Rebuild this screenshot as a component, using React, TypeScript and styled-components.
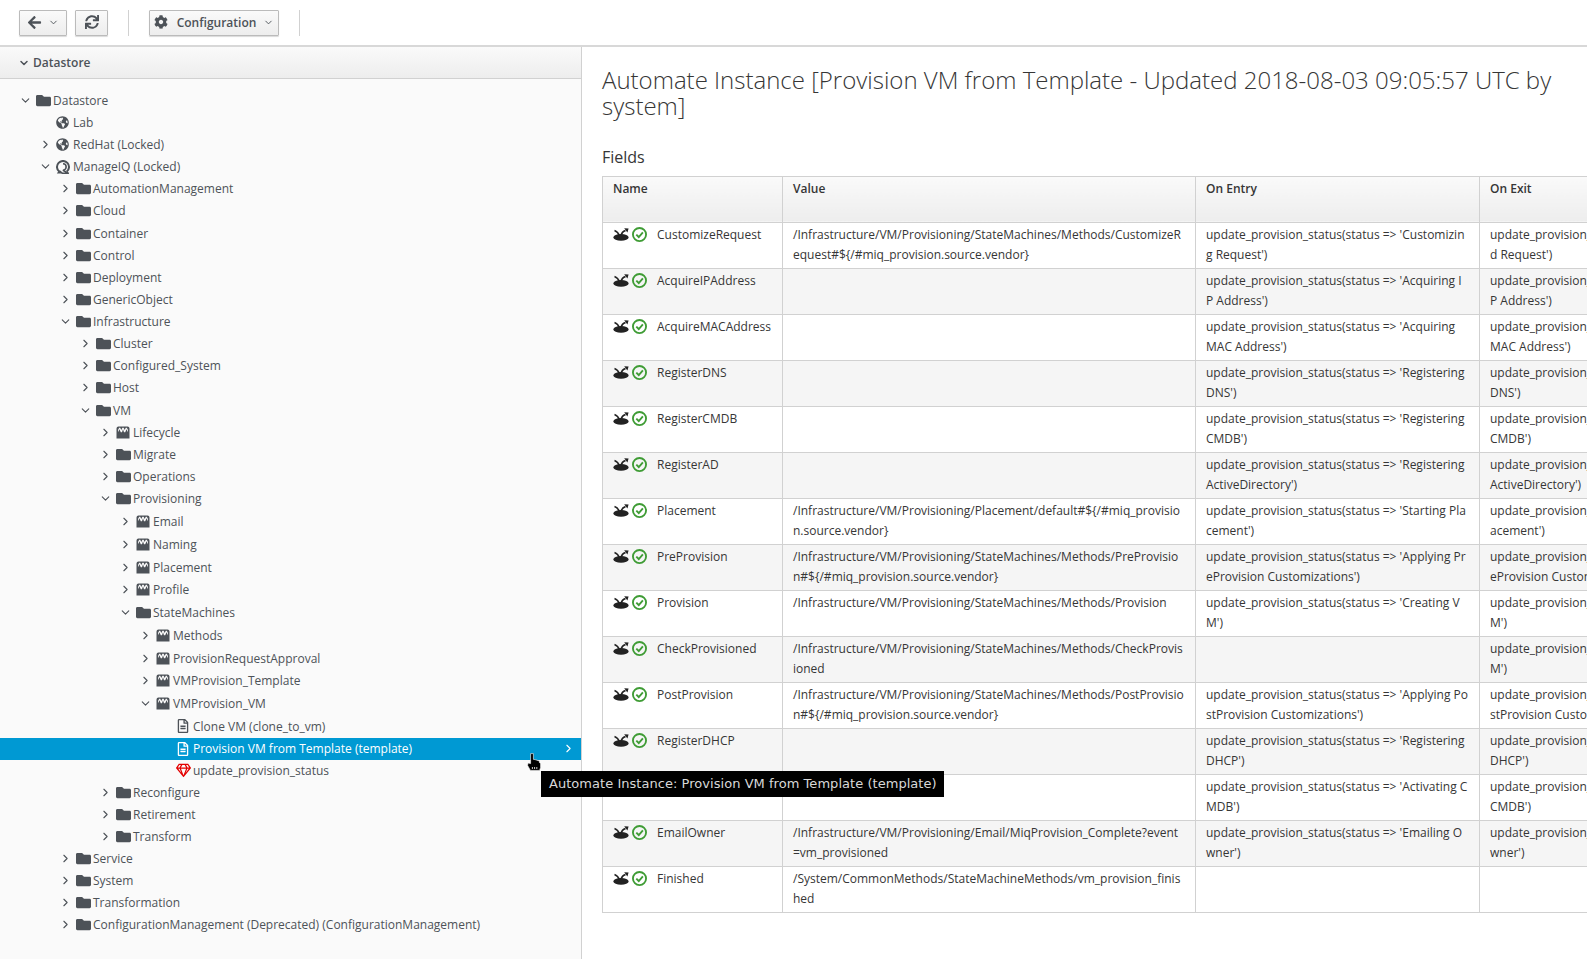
import React from 'react';
import styled, { createGlobalStyle } from 'styled-components';
import { FaArrowLeft, FaCog, FaFolder, FaGlobeAmericas, FaRegFileAlt, FaRegGem, FaSync } from 'react-icons/fa';
import { FiChevronDown, FiChevronRight } from 'react-icons/fi';

const GlobalStyle = createGlobalStyle`
  html, body { margin: 0; padding: 0; height: 100%; }
  body {
    font-family: "Open Sans", "Liberation Sans", sans-serif;
    font-size: 12px;
    color: #363636;
    background: #fff;
    overflow: hidden;
  }
  * { box-sizing: border-box; }
`;

type IconKind = 'folder' | 'globe' | 'miq' | 'klass' | 'file' | 'ruby';
type Toggle = 'open' | 'closed' | 'none';

interface TreeNode {
  label: string;
  depth: number;
  icon: IconKind;
  toggle: Toggle;
  selected?: boolean;
}

const treeNodes: TreeNode[] = [
  { label: 'Datastore', depth: 0, icon: 'folder', toggle: 'open' },
  { label: 'Lab', depth: 1, icon: 'globe', toggle: 'none' },
  { label: 'RedHat (Locked)', depth: 1, icon: 'globe', toggle: 'closed' },
  { label: 'ManageIQ (Locked)', depth: 1, icon: 'miq', toggle: 'open' },
  { label: 'AutomationManagement', depth: 2, icon: 'folder', toggle: 'closed' },
  { label: 'Cloud', depth: 2, icon: 'folder', toggle: 'closed' },
  { label: 'Container', depth: 2, icon: 'folder', toggle: 'closed' },
  { label: 'Control', depth: 2, icon: 'folder', toggle: 'closed' },
  { label: 'Deployment', depth: 2, icon: 'folder', toggle: 'closed' },
  { label: 'GenericObject', depth: 2, icon: 'folder', toggle: 'closed' },
  { label: 'Infrastructure', depth: 2, icon: 'folder', toggle: 'open' },
  { label: 'Cluster', depth: 3, icon: 'folder', toggle: 'closed' },
  { label: 'Configured_System', depth: 3, icon: 'folder', toggle: 'closed' },
  { label: 'Host', depth: 3, icon: 'folder', toggle: 'closed' },
  { label: 'VM', depth: 3, icon: 'folder', toggle: 'open' },
  { label: 'Lifecycle', depth: 4, icon: 'klass', toggle: 'closed' },
  { label: 'Migrate', depth: 4, icon: 'folder', toggle: 'closed' },
  { label: 'Operations', depth: 4, icon: 'folder', toggle: 'closed' },
  { label: 'Provisioning', depth: 4, icon: 'folder', toggle: 'open' },
  { label: 'Email', depth: 5, icon: 'klass', toggle: 'closed' },
  { label: 'Naming', depth: 5, icon: 'klass', toggle: 'closed' },
  { label: 'Placement', depth: 5, icon: 'klass', toggle: 'closed' },
  { label: 'Profile', depth: 5, icon: 'klass', toggle: 'closed' },
  { label: 'StateMachines', depth: 5, icon: 'folder', toggle: 'open' },
  { label: 'Methods', depth: 6, icon: 'klass', toggle: 'closed' },
  { label: 'ProvisionRequestApproval', depth: 6, icon: 'klass', toggle: 'closed' },
  { label: 'VMProvision_Template', depth: 6, icon: 'klass', toggle: 'closed' },
  { label: 'VMProvision_VM', depth: 6, icon: 'klass', toggle: 'open' },
  { label: 'Clone VM (clone_to_vm)', depth: 7, icon: 'file', toggle: 'none' },
  { label: 'Provision VM from Template (template)', depth: 7, icon: 'file', toggle: 'none', selected: true },
  { label: 'update_provision_status', depth: 7, icon: 'ruby', toggle: 'none' },
  { label: 'Reconfigure', depth: 4, icon: 'folder', toggle: 'closed' },
  { label: 'Retirement', depth: 4, icon: 'folder', toggle: 'closed' },
  { label: 'Transform', depth: 4, icon: 'folder', toggle: 'closed' },
  { label: 'Service', depth: 2, icon: 'folder', toggle: 'closed' },
  { label: 'System', depth: 2, icon: 'folder', toggle: 'closed' },
  { label: 'Transformation', depth: 2, icon: 'folder', toggle: 'closed' },
  { label: 'ConfigurationManagement (Deprecated) (ConfigurationManagement)', depth: 2, icon: 'folder', toggle: 'closed' },
];

// the tree's line height drifts a little between its three stretches
const rowHeight = (index: number) => (index < 18 ? 22.13 : index < 29 ? 22.75 : 22);

const sm = '/Infrastructure/VM/Provisioning/StateMachines/Methods/';
const up = (s: string) => `update_provision_status(status => '${s}')`;

const fieldRows: [string, string, string, string][] = [
  ['CustomizeRequest', `${sm}CustomizeRequest#\${/#miq_provision.source.vendor}`, up('Customizing Request'), up('Customized Request')],
  ['AcquireIPAddress', '', up('Acquiring IP Address'), up('Acquiring IP Address')],
  ['AcquireMACAddress', '', up('Acquiring MAC Address'), up('Acquiring MAC Address')],
  ['RegisterDNS', '', up('Registering DNS'), up('Registering DNS')],
  ['RegisterCMDB', '', up('Registering CMDB'), up('Registering CMDB')],
  ['RegisterAD', '', up('Registering ActiveDirectory'), up('Registering ActiveDirectory')],
  ['Placement', '/Infrastructure/VM/Provisioning/Placement/default#${/#miq_provision.source.vendor}', up('Starting Placement'), up('Finished Placement')],
  ['PreProvision', `${sm}PreProvision#\${/#miq_provision.source.vendor}`, up('Applying PreProvision Customizations'), up('Applying PreProvision Customizations')],
  ['Provision', `${sm}Provision`, up('Creating VM'), up('Creating VM')],
  ['CheckProvisioned', `${sm}CheckProvisioned`, '', up('Creating VM')],
  ['PostProvision', `${sm}PostProvision#\${/#miq_provision.source.vendor}`, up('Applying PostProvision Customizations'), up('Applied PostProvision Customizations')],
  ['RegisterDHCP', '', up('Registering DHCP'), up('Registering DHCP')],
  ['ActivateCMDB', '', up('Activating CMDB'), up('Activating CMDB')],
  ['EmailOwner', '/Infrastructure/VM/Provisioning/Email/MiqProvision_Complete?event=vm_provisioned', up('Emailing Owner'), up('Emailing Owner')],
  ['Finished', '/System/CommonMethods/StateMachineMethods/vm_provision_finished', '', ''],
];

const Page = styled.div`
  width: 1587px;
  height: 959px;
  display: flex;
  flex-direction: column;
  position: relative;
  overflow: hidden;
`;

const Toolbar = styled.div`
  height: 47px;
  flex: none;
  display: flex;
  align-items: flex-start;
  padding: 10px 0 0 19px;
  border-bottom: 2px solid #d8d8d8;
  background: #fff;
`;

const ToolButton = styled.button<{ $w: number; $ml?: number }>`
  width: ${p => p.$w}px;
  height: 26px;
  margin-left: ${p => p.$ml || 0}px;
  padding: 0 0 2px;
  display: flex;
  align-items: center;
  justify-content: center;
  gap: 6px;
  font-family: inherit;
  font-size: 12px;
  font-weight: 600;
  color: #4d5258;
  background: linear-gradient(#fafafa, #ededed);
  border: 1px solid #bbb;
  border-radius: 1px;
  box-shadow: 0 1px 1px rgba(3, 3, 3, 0.15);
`;

const ConfigLabel = styled.span`
  margin: 0 1px 0 3px;
`;

const ToolSep = styled.div`
  width: 1px;
  height: 26px;
  background: #d1d1d1;
  margin: 0 20px;
`;

const Body = styled.div`
  flex: 1;
  display: flex;
  min-height: 0;
`;

const Sidebar = styled.aside`
  width: 582px;
  flex: none;
  display: flex;
  flex-direction: column;
  background: #fafafa;
  border-right: 1px solid #d1d1d1;
`;

const SideHeader = styled.div`
  height: 32px;
  flex: none;
  display: flex;
  align-items: center;
  gap: 3px;
  padding-left: 18px;
  font-weight: 600;
  color: #4d5258;
  background: linear-gradient(#fafafa, #ededed);
  border-bottom: 1px solid #d1d1d1;
  svg { stroke-width: 3; }
`;

const Tree = styled.div`
  padding-top: 10.3px;
`;

const Row = styled.div<{ $depth: number; $height: number; $selected?: boolean }>`
  height: ${p => p.$height}px;
  display: flex;
  align-items: center;
  padding-left: ${p => 19 + p.$depth * 20}px;
  color: ${p => (p.$selected ? '#fff' : '#4d5258')};
  background: ${p => (p.$selected ? '#0099d3' : 'transparent')};
  white-space: nowrap;
`;

const ToggleSlot = styled.span`
  width: 17px;
  flex: none;
  display: flex;
  align-items: center;
  font-size: 13px;
  color: #4d5258;
`;

const IconSlot = styled.span<{ $color?: string }>`
  width: 17px;
  flex: none;
  display: flex;
  align-items: center;
  color: ${p => p.$color || 'inherit'};
`;

const RowEnd = styled.span`
  margin-left: auto;
  margin-right: 6px;
  display: flex;
  font-size: 13px;
`;

const Main = styled.main`
  flex: 1;
  min-width: 0;
  padding: 20px 0 0 20px;
  overflow: hidden;
  background: #fff;
`;

const Title = styled.h1`
  margin: 0;
  font-size: 24px;
  line-height: 26.4px;
  font-weight: 300;
  color: #363636;
  max-width: 960px;
`;

const SectionTitle = styled.h3`
  margin: 26px 0 0;
  height: 30px;
  font-size: 16px;
  line-height: 22px;
  font-weight: 400;
  color: #363636;
`;

const Table = styled.table`
  width: 1160px;
  table-layout: fixed;
  border-collapse: collapse;
  border: 1px solid #d1d1d1;
`;

const Th = styled.th`
  height: 46px;
  padding: 2px 10px;
  text-align: left;
  vertical-align: top;
  font-size: 12px;
  line-height: 20px;
  font-weight: 600;
  color: #363636;
  background: linear-gradient(#fafafa, #ededed);
  border: 1px solid #d1d1d1;
`;

const Tr = styled.tr`
  background: #fff;
  &:nth-child(even) { background: #f5f5f5; }
`;

const Td = styled.td`
  height: 46px;
  padding: 2px 11px 2px 10px;
  vertical-align: top;
  font-size: 12px;
  line-height: 20px;
  color: #363636;
  word-break: break-all;
  border: 1px solid #d1d1d1;
`;

const NameCell = styled.div`
  display: flex;
  align-items: flex-start;
`;

const StateIcon = styled.svg`
  width: 16px;
  height: 14px;
  margin-top: 2px;
  flex: none;
`;

const CheckIcon = styled.svg`
  width: 15px;
  height: 15px;
  margin: 2px 0 0 3px;
  flex: none;
`;

const NameText = styled.span`
  margin-left: 10px;
`;

const Tooltip = styled.div`
  position: absolute;
  left: 541px;
  top: 771px;
  width: 403px;
  height: 26px;
  padding: 0 0 2px 8px;
  display: flex;
  align-items: center;
  background: #000;
  color: #d8d8d8;
  font-family: "DejaVu Sans", sans-serif;
  font-size: 13px;
  letter-spacing: 0.04px;
  white-space: nowrap;
`;

const Cursor = styled.svg`
  position: absolute;
  left: 527px;
  top: 753px;
  width: 14px;
  height: 18px;
`;

const ManageIqIcon = () => (
  <svg width="14" height="14" viewBox="0 0 14 14">
    <path d="M3.2 11.6A6 6 0 1 1 10.8 11.6" fill="none" stroke="#4d5258" strokeWidth="2" />
    <path d="M7 3.8A3.2 3.2 0 1 1 6.9 10.2L12.8 13.4H6.5L3.4 11" fill="none" stroke="#4d5258" strokeWidth="1.6" />
    <path d="M0.8 13.4H5.5L3 10.4Z" fill="#4d5258" />
  </svg>
);

const KlassIcon = () => (
  <svg width="14" height="13" viewBox="0 0 14 13">
    <path
      fill="#4d5258"
      fillRule="evenodd"
      d="M2.5 0.5H11.5A2 2 0 0 1 13.5 2.5V12.5H0.5V2.5A2 2 0 0 1 2.5 0.5ZM2 6.2L3.4 3.2L4.8 6.2H6L7 3.2L8 6.2H9.2L10.6 3.2L12 6.2V4L10.8 1.8H9.8L8.7 4L7.6 1.8H6.4L5.3 4L4.2 1.8H3.2L2 4Z"
    />
  </svg>
);

const renderIcon = (kind: IconKind, selected?: boolean) => {
  const tone = selected ? '#fff' : '#4d5258';
  switch (kind) {
    case 'folder':
      return <IconSlot $color={tone}><FaFolder size={15} /></IconSlot>;
    case 'globe':
      return <IconSlot $color={tone}><FaGlobeAmericas size={13} /></IconSlot>;
    case 'miq':
      return <IconSlot><ManageIqIcon /></IconSlot>;
    case 'klass':
      return <IconSlot><KlassIcon /></IconSlot>;
    case 'file':
      return <IconSlot $color={tone}><FaRegFileAlt size={14} /></IconSlot>;
    case 'ruby':
      return <IconSlot $color="#e30000"><FaRegGem size={15} /></IconSlot>;
  }
};

const FieldIcons = () => (
  <>
    <StateIcon viewBox="0 0 16 14">
      <ellipse cx="8" cy="10.4" rx="7.6" ry="3.4" fill="#222" />
      <path d="M1.5 3.5C3.5 4.2 5.5 6 6.5 9" fill="none" stroke="#222" strokeWidth="1.6" />
      <path d="M8 9C8.5 6 10 4.2 12.5 3.6" fill="none" stroke="#222" strokeWidth="1.6" />
      <path fill="#222" d="M11.2 1.2L15.6 1.4L14.4 5.6Z" />
    </StateIcon>
    <CheckIcon viewBox="0 0 16 16">
      <circle cx="8" cy="8" r="7" fill="none" stroke="#3f9c35" strokeWidth="2" />
      <path d="M4.6 8.2L7.2 10.7L11.6 5.8" fill="none" stroke="#3f9c35" strokeWidth="2" />
    </CheckIcon>
  </>
);

export default function App() {
  return (
    <Page>
      <GlobalStyle />
      <Toolbar>
        <ToolButton $w={48}>
          <FaArrowLeft size={15} />
          <FiChevronDown size={11} />
        </ToolButton>
        <ToolButton $w={33} $ml={8}>
          <FaSync size={14} />
        </ToolButton>
        <ToolSep />
        <ToolButton $w={130}>
          <FaCog size={14} />
          <ConfigLabel>Configuration</ConfigLabel>
          <FiChevronDown size={11} />
        </ToolButton>
        <ToolSep />
      </Toolbar>
      <Body>
        <Sidebar>
          <SideHeader>
            <FiChevronDown size={12} />
            Datastore
          </SideHeader>
          <Tree>
            {treeNodes.map((n, i) => (
              <Row key={n.label} $depth={n.depth} $height={rowHeight(i)} $selected={n.selected}>
                <ToggleSlot>
                  {n.toggle === 'open' && <FiChevronDown />}
                  {n.toggle === 'closed' && <FiChevronRight />}
                </ToggleSlot>
                {renderIcon(n.icon, n.selected)}
                <span>{n.label}</span>
                {n.selected && <RowEnd><FiChevronRight /></RowEnd>}
              </Row>
            ))}
          </Tree>
        </Sidebar>
        <Main>
          <Title>Automate Instance [Provision VM from Template - Updated 2018-08-03 09:05:57 UTC by system]</Title>
          <SectionTitle>Fields</SectionTitle>
          <Table>
            <colgroup>
              <col width={180} />
              <col width={413} />
              <col width={284} />
              <col width={283} />
            </colgroup>
            <thead>
              <tr>
                <Th>Name</Th>
                <Th>Value</Th>
                <Th>On Entry</Th>
                <Th>On Exit</Th>
              </tr>
            </thead>
            <tbody>
              {fieldRows.map(([name, value, entry, exit]) => (
                <Tr key={name}>
                  <Td>
                    <NameCell>
                      <FieldIcons />
                      <NameText>{name}</NameText>
                    </NameCell>
                  </Td>
                  <Td>{value}</Td>
                  <Td>{entry}</Td>
                  <Td>{exit}</Td>
                </Tr>
              ))}
            </tbody>
          </Table>
        </Main>
      </Body>
      <Tooltip>Automate Instance: Provision VM from Template (template)</Tooltip>
      <Cursor viewBox="0 0 14 18">
        <path fill="#000" stroke="#fff" strokeWidth="0.6" d="M3.6 0.6H6.4V6.4L8 6.6L10 7.2L12.4 8V9.6L13.6 10.4V14.4L12.6 17.4H3.4L0.6 12.4L1 10L3.6 10.6Z" />
        <path stroke="#fff" strokeWidth="0.8" d="M5.4 14V16M7.6 14V16M9.8 14V16" />
      </Cursor>
    </Page>
  );
}
